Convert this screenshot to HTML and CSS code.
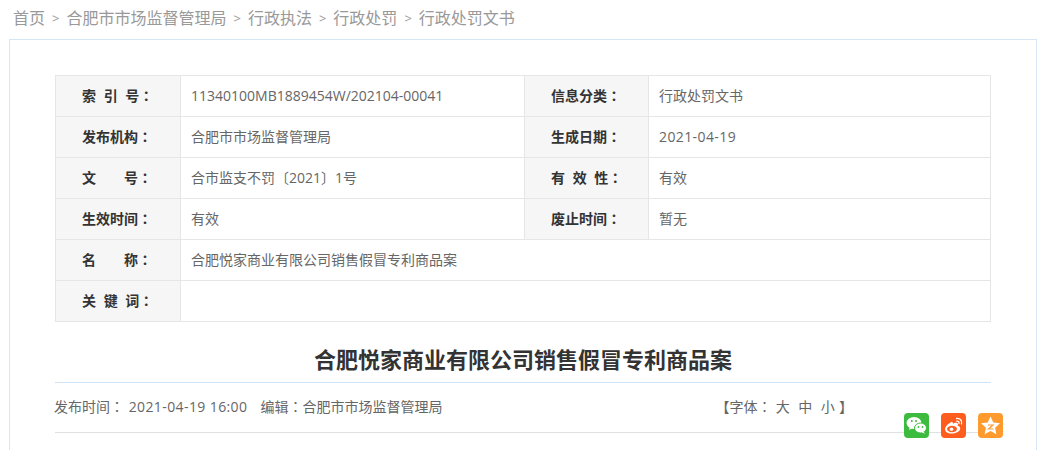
FILE: index.html
```html
<!DOCTYPE html>
<html lang="zh-CN">
<head>
<meta charset="utf-8">
<title>行政处罚文书</title>
<link rel="stylesheet" href="styles.css">
</head>
<body>
<nav class="crumb"><a>首页</a><i>&gt;</i><a>合肥市市场监督管理局</a><i>&gt;</i><a>行政执法</a><i>&gt;</i><a>行政处罚</a><i>&gt;</i><a>行政处罚文书</a></nav>
<main class="panel">
  <table class="info">
    <colgroup><col class="c1"><col class="c2"><col class="c3"><col class="c4"></colgroup>
    <tr><th><span class="sp">索 引 号</span><span class="cn">：</span></th><td>11340100MB1889454W/202104-00041</td><th>信息分类<span class="cn">：</span></th><td>行政处罚文书</td></tr>
    <tr><th>发布机构<span class="cn">：</span></th><td>合肥市市场监督管理局</td><th>生成日期<span class="cn">：</span></th><td class="date">2021-04-19</td></tr>
    <tr><th>文　　号<span class="cn">：</span></th><td>合市监支不罚〔2021〕1号</td><th><span class="sp">有 效 性</span><span class="cn">：</span></th><td>有效</td></tr>
    <tr><th>生效时间<span class="cn">：</span></th><td>有效</td><th>废止时间<span class="cn">：</span></th><td>暂无</td></tr>
    <tr><th>名　　称<span class="cn">：</span></th><td colspan="3">合肥悦家商业有限公司销售假冒专利商品案</td></tr>
    <tr><th><span class="sp">关 键 词</span><span class="cn">：</span></th><td colspan="3"></td></tr>
  </table>
  <h1 class="title">合肥悦家商业有限公司销售假冒专利商品案</h1>
  <div class="meta">
    <div class="meta-left"><span>发布时间<span class="cn">：</span> <span class="date meta-date">2021-04-19 16:00</span></span><span>编辑<span class="cn">：</span>合肥市市场监督管理局</span></div>
    <div class="meta-font">【字体<span class="cn">：</span><b>大</b><b>中</b><b>小</b>】</div>
    <div class="share">
      <svg class="ico wx" viewBox="0 0 25 25"><ellipse cx="10" cy="10" rx="7.500" ry="6" fill="#fff"/><path d="M6 14l-1 3 3.500-1.800z" fill="#fff"/><ellipse cx="16.500" cy="15" rx="6" ry="5" fill="#fff" stroke="#3dbb3f"/><path d="M19.500 18.500l1.500 2.300-3.500-1.600z" fill="#fff"/><circle cx="7.800" cy="8" r="1" fill="#3dbb3f"/><circle cx="12" cy="8" r="1" fill="#3dbb3f"/><circle cx="14.500" cy="14" r=".9" fill="#3dbb3f"/><circle cx="18.500" cy="14" r=".9" fill="#3dbb3f"/></svg>
      <svg class="ico wb" viewBox="0 0 25 25"><path d="M10.500 9c-4 2-7 5-6.300 8 .6 3 4.500 4 8 3.500 4-.5 7-2.500 7-5 0-1.700-1.500-2.300-2.500-2.700.5-1.300.4-2.500-1-3-1.300-.3-3 .4-3.800 1 .2-1.200-.6-2.600-1.400-1.800z" fill="#fff"/><ellipse cx="11" cy="16" rx="5" ry="3.300" fill="#fe5d1e"/><circle cx="10.500" cy="16.200" r="1.800" fill="#fff"/><path d="M15.500 5.500c3.500-.6 6 2 5 5.500M15.800 8.200c1.600-.3 2.600 1 2.200 2.500" fill="none" stroke="#fff" stroke-width="1.300" stroke-linecap="round"/></svg>
      <svg class="ico qz" viewBox="0 0 25 25"><path d="M12.500 3.500l2.800 5.900 6.700.9-4.900 4.500 1.300 6.500-5.900-3.200-5.900 3.200 1.300-6.500L3 10.300l6.700-.9z" fill="#fff"/><path d="M10 12h5l-4.500 4h5" fill="none" stroke="#fe9a2e" stroke-width="1.200"/></svg>
    </div>
  </div>
</main>
</body>
</html>
```
FILE: styles.css
```css
* { box-sizing: border-box; }
html, body { margin: 0; height: 450px; overflow: hidden; background: #fff; }
body {
  font-family: "Open Sans", "Noto Sans CJK SC", "Liberation Sans", sans-serif;
  font-size: 14px;
  color: #666;
}
.crumb {
  height: 39px;
  padding: 0 0 2px 13px;
  display: flex;
  align-items: center;
  font-size: 16px;
  color: #999;
  line-height: 37px;
}
.crumb i { font-style: normal; font-size: 13px; margin: 0 7px; }
.panel {
  margin: 0 11px 0 9px;
  height: 420px;
  padding: 35px 45px 0;
  border: 1px solid #d7e6f6;
}
.info {
  width: 936px;
  table-layout: fixed;
  border-collapse: collapse;
}
.c1 { width: 125px; }
.c2 { width: 344px; }
.c3 { width: 124px; }
.info tr { height: 41px; }
.info th, .info td {
  border: 1px solid #e6e6e6;
  padding: 0 10px 1px 10px;
  font-size: 14px;
  line-height: 20px;
  text-align: left;
}
.info th {
  background: #f6f6f6;
  color: #333;
  font-weight: 700;
  padding-left: 26px;
}
.sp { word-spacing: 4px; }
.cn { font-family: "Noto Sans CJK TC", sans-serif; font-feature-settings: "locl" 0; }
.date { letter-spacing: .4px; }
.meta-date { margin-left: 1px; }
.title {
  margin: 0;
  height: 61px;
  padding-top: 17px;
  border-bottom: 1px solid #cfe3f7;
  text-align: center;
  font-size: 22px;
  line-height: 40px;
  font-weight: 700;
  color: #333;
}
.meta {
  position: relative;
  height: 50px;
  padding-bottom: 3px;
  border-bottom: 1px solid #e0e0e0;
  display: flex;
  align-items: center;
  justify-content: space-between;
}
.meta-left { display: flex; gap: 13px; margin-left: -1px; }
.meta-font { margin-right: 138px; }
.meta-font b { font-weight: 400; margin: 0 4.250px; }
.share {
  position: absolute;
  left: 849px;
  top: 30px;
  display: flex;
  gap: 12px;
}
.ico { display: block; width: 25px; height: 25px; border-radius: 4px; }
.wx { background: #3dbb3f; }
.wb { background: #fe5d1e; }
.qz { background: #fe9a2e; }
```
